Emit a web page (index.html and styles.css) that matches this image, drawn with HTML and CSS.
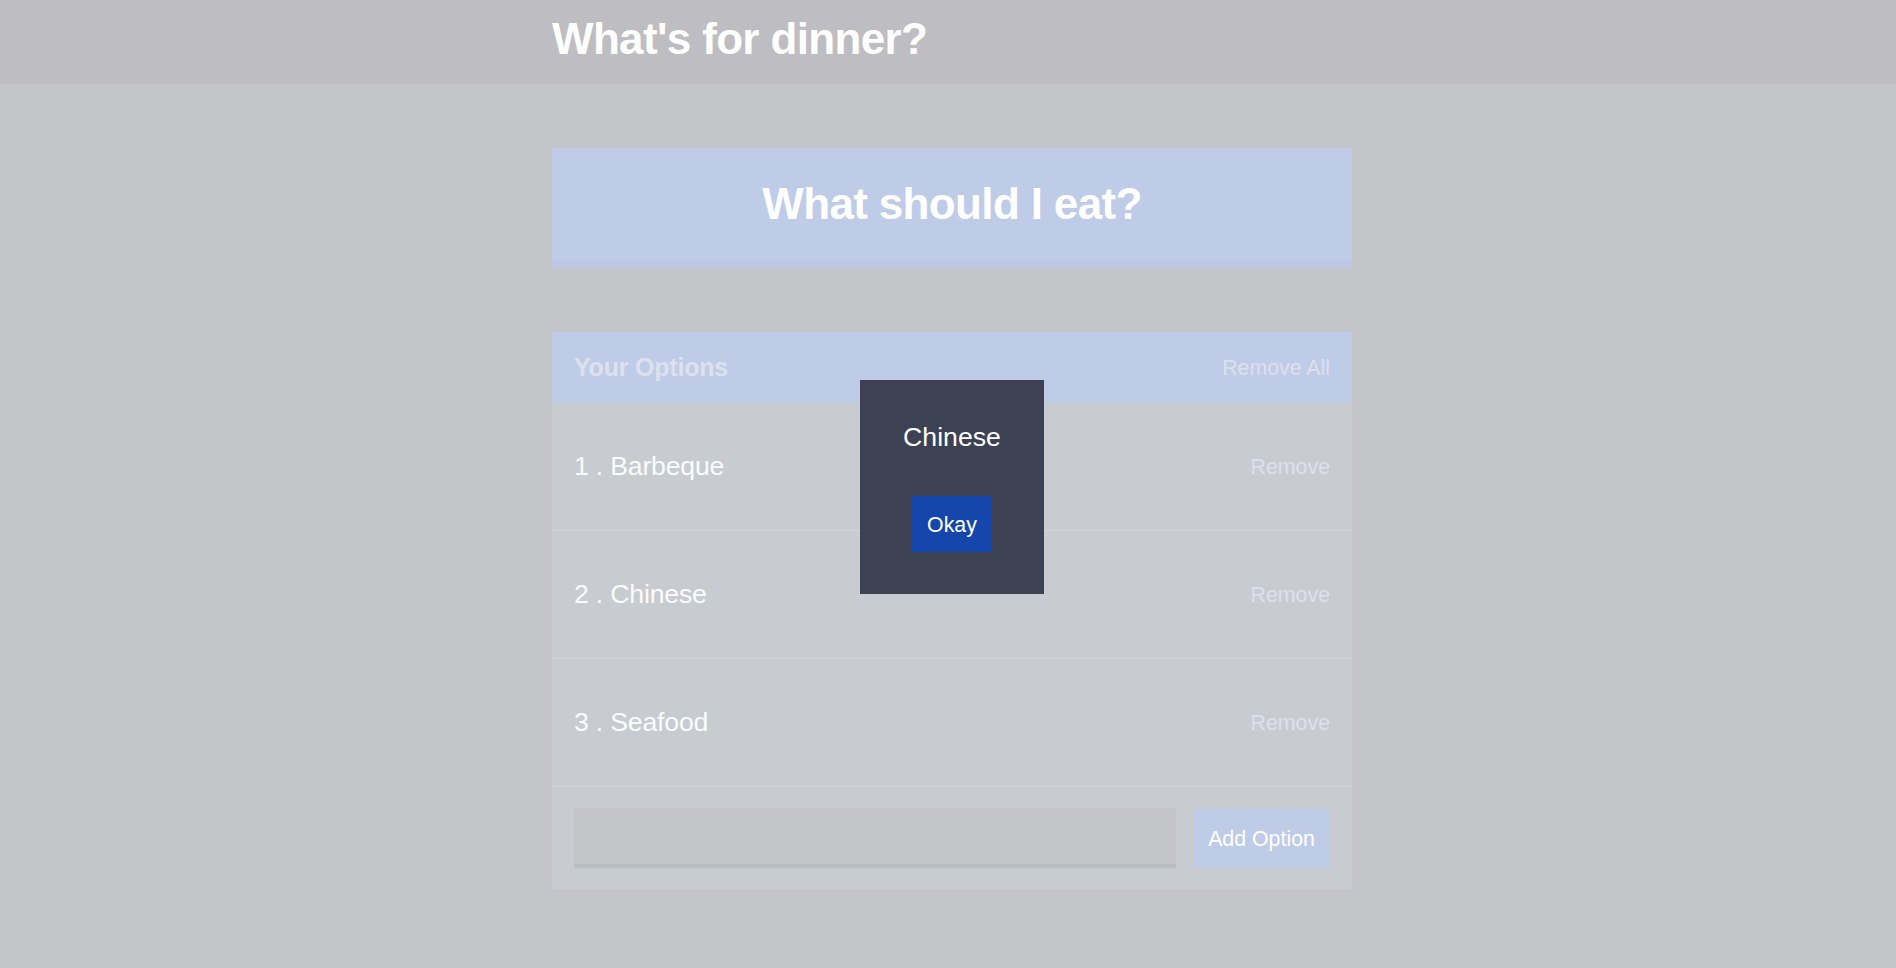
FILE: index.html
```html
<!DOCTYPE html>
<html lang="en">
<head>
<meta charset="utf-8">
<title>What's for dinner?</title>
<link rel="stylesheet" href="styles.css">
</head>
<body>
<header class="header">
  <div class="container">
    <h1 class="header__title">What's for dinner?</h1>
  </div>
</header>
<main class="page">
  <div class="container">
    <button class="big-button">What should I eat?</button>
    <section class="widget">
      <div class="widget-header">
        <h3 class="widget-header__title">Your Options</h3>
        <button class="button--link">Remove All</button>
      </div>
      <div class="option">
        <p class="option__text">1 . Barbeque</p>
        <button class="button--link">Remove</button>
      </div>
      <div class="option">
        <p class="option__text">2 . Chinese</p>
        <button class="button--link">Remove</button>
      </div>
      <div class="option">
        <p class="option__text">3 . Seafood</p>
        <button class="button--link">Remove</button>
      </div>
      <form class="add-option">
        <input class="add-option__input" type="text" name="option">
        <button class="button" type="button">Add Option</button>
      </form>
    </section>
  </div>
</main>
<div class="modal">
  <h3 class="modal__title">Chinese</h3>
  <button class="modal__button">Okay</button>
</div>
</body>
</html>
```
FILE: styles.css
```css
* { box-sizing: border-box; }
html, body { margin: 0; padding: 0; }
body {
  background: #c4c5c8;
  font-family: "Liberation Sans", Arial, Helvetica, sans-serif;
  color: #fff;
  height: 968px;
  overflow: hidden;
}
button { font-family: inherit; cursor: pointer; }

.container {
  width: 800px;
  margin: 0 auto;
}

.header {
  background: #bebdc2;
  height: 84px;
  padding: 17px 0 0 8px;
}
.header__title {
  margin: 0;
  font-size: 44px;
  line-height: 44px;
  font-weight: bold;
  letter-spacing: -0.65px;
  color: #fff;
}

.page {
  padding: 64px 0 0 8px;
}

.big-button {
  display: block;
  width: 100%;
  height: 120px;
  margin: 0 0 64px;
  padding: 0;
  border: none;
  border-bottom: 8px solid #bcc8e3;
  background: #bfcce8;
  color: #fff;
  font-size: 44px;
  line-height: 44px;
  font-weight: bold;
  letter-spacing: -0.65px;
}

.widget {
  background: #c8cbd0;
}
.widget-header {
  display: flex;
  justify-content: space-between;
  align-items: center;
  height: 71px;
  padding: 0 22px;
  background: #bfcce8;
}
.widget-header__title {
  margin: 0;
  font-size: 25px;
  font-weight: bold;
  letter-spacing: -0.2px;
  color: #dde1ed;
}
.button--link {
  background: none;
  border: none;
  padding: 0;
  margin-top: 2px;
  font-size: 21.33px;
  color: #dde0ea;
}

.option {
  display: flex;
  justify-content: space-between;
  align-items: center;
  height: 128px;
  padding: 0 22px;
  border-bottom: 1px solid #d1d4d9;
}
.option__text {
  margin: 0;
  font-size: 26.67px;
  letter-spacing: -0.2px;
  color: #fafbfc;
}

.add-option {
  display: flex;
  gap: 17px;
  padding: 21px 22px;
  margin: 0;
}
.add-option__input {
  flex: 1;
  height: 60px;
  border: none;
  border-bottom: 4px solid #bcbdc1;
  background: #c4c5c8;
  outline: none;
}
.button {
  width: 137px;
  height: 60px;
  border: none;
  padding: 2px 0 0;
  background: #bfcce8;
  color: #fff;
  font-size: 21.33px;
}

.modal {
  position: absolute;
  left: 860px;
  top: 380px;
  width: 184px;
  height: 214px;
  background: #3c4154;
  display: flex;
  flex-direction: column;
  align-items: center;
  padding-top: 41px;
}
.modal__title {
  margin: 0 0 43px;
  font-size: 26.67px;
  line-height: 32px;
  font-weight: normal;
  color: #fff;
}
.modal__button {
  width: 80px;
  height: 56px;
  border: none;
  padding: 2px 0 0;
  background: #1446ab;
  color: #fff;
  font-size: 21.33px;
}
```
